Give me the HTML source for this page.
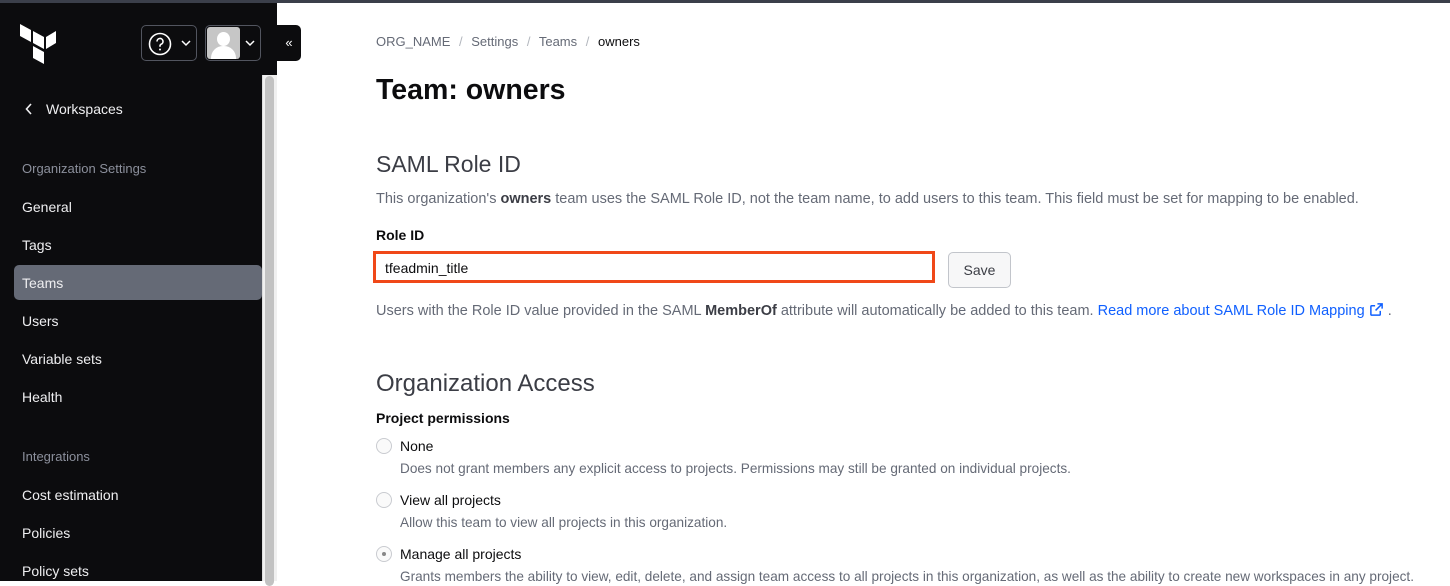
<!DOCTYPE html>
<html><head><style>
*{margin:0;padding:0;box-sizing:border-box}
body{width:1450px;height:581px;overflow:hidden;background:#fff;font-family:"Liberation Sans",sans-serif;position:relative;color:#3b3d45}
.top{position:absolute;left:0;top:0;width:1450px;height:3px;background:#3b3f4a}
.side{position:absolute;left:0;top:3px;width:262px;height:578px;background:#0c0c0e;color:#efeff1}
.track{position:absolute;left:262px;top:3px;width:15px;height:578px;background:#f0f0f0;border-left:1px solid #ddd}
.thumb{position:absolute;left:265px;top:76px;width:9px;height:510px;background:#c2c2c2;border-radius:5px}
.topside{position:absolute;left:262px;top:3px;width:15px;height:72px;background:#0c0c0e}
.tab{position:absolute;left:277px;top:25px;width:24px;height:36px;background:#0c0c0e;border-radius:0 5px 5px 0;color:#fff;font-size:13px;text-align:center;line-height:36px}
.nav{position:absolute;left:22px;font-size:14px;color:#efeff1}
.hdr{position:absolute;left:22px;font-size:13px;color:#8c909c}
.btn{position:absolute;top:25px;height:36px;border:1px solid #52555f;border-radius:5px}
.main{position:absolute;left:376px;color:#3b3d45}
.g{color:#656a76;font-size:14.5px}
.radio{position:absolute;left:376px;width:16px;height:16px;border:1px solid #c9cbd0;border-radius:50%;background:#fafafa}
.chev{position:absolute;left:39px;top:13px}
</style></head><body>
<div class="top"></div>
<div class="side">
<svg style="position:absolute;left:20px;top:21px" width="36" height="40" viewBox="0 0 36 40"><path d="M0 0l11 6v12L0 12z M13 7l11 6v12l-11-6z M26 13l10-6v12l-10 6z M13 22l11 6v12l-11-6z" fill="#fff"/></svg>
</div>
<div class="btn" style="left:141px;width:56px"><svg style="position:absolute;left:6px;top:6px" width="24" height="24" viewBox="0 0 24 24"><circle cx="12" cy="12" r="10.5" stroke="#fff" stroke-width="1.6" fill="none"/><path d="M9 9.5a3 3 0 1 1 4 2.8c-.8.4-1 1-1 1.8v.6" stroke="#fff" stroke-width="1.6" fill="none"/><circle cx="12" cy="17.5" r="1" fill="#fff"/></svg><svg class="chev" width="10" height="8" viewBox="0 0 10 8"><path d="M1 2l4 4 4-4" stroke="#fff" stroke-width="1.5" fill="none"/></svg></div>
<div class="btn" style="left:205px;width:56px"><div style="position:absolute;left:1px;top:1px;width:33px;height:32px;background:#c6c6c6;border-radius:3px;overflow:hidden"><div style="position:absolute;left:10px;top:5px;width:13px;height:14px;border-radius:50%;background:#fff"></div><div style="position:absolute;left:4px;top:19px;width:25px;height:20px;border-radius:12px 12px 0 0;background:#fff"></div></div><svg class="chev" width="10" height="8" viewBox="0 0 10 8"><path d="M1 2l4 4 4-4" stroke="#fff" stroke-width="1.5" fill="none"/></svg></div>
<div class="track"></div><div class="topside"></div><div class="thumb"></div>
<div class="tab">«</div>
<svg style="position:absolute;left:25px;top:103px" width="8" height="12" viewBox="0 0 8 12"><path d="M6 1L1.5 6 6 11" stroke="#efeff1" stroke-width="1.6" fill="none"/></svg>
<div class="nav" style="top:101px;left:46px">Workspaces</div>
<div class="hdr" style="top:161px">Organization Settings</div>
<div class="nav" style="top:199px">General</div>
<div class="nav" style="top:237px">Tags</div>
<div style="position:absolute;left:14px;top:265px;width:248px;height:35px;background:#656a76;border-radius:5px"></div>
<div class="nav" style="top:275px">Teams</div>
<div class="nav" style="top:313px">Users</div>
<div class="nav" style="top:351px">Variable sets</div>
<div class="nav" style="top:389px">Health</div>
<div class="hdr" style="top:449px">Integrations</div>
<div class="nav" style="top:487px">Cost estimation</div>
<div class="nav" style="top:525px">Policies</div>
<div class="nav" style="top:563px">Policy sets</div>

<div class="main g" style="top:34px;font-size:13px">ORG_NAME <span style="color:#b2b6bd;margin:0 5px">/</span> Settings <span style="color:#b2b6bd;margin:0 5px">/</span> Teams <span style="color:#b2b6bd;margin:0 5px">/</span> <span style="color:#0c0c0e">owners</span></div>
<div class="main" style="top:74px;font-size:28.5px;font-weight:bold;color:#0c0c0e">Team: owners</div>
<div class="main" style="top:151px;font-size:23px">SAML Role ID</div>
<div class="main g" style="top:191px">This organization's <b style="color:#3b3d45">owners</b> team uses the SAML Role ID, not the team name, to add users to this team. This field must be set for mapping to be enabled.</div>
<div class="main" style="top:227px;font-size:14px;font-weight:bold;color:#0c0c0e">Role ID</div>
<div style="position:absolute;left:373px;top:251px;width:562px;height:32px;border:3px solid #f04818;background:#fff"></div>
<div class="main" style="left:385px;top:260px;font-size:14px;color:#0c0c0e">tfeadmin_title</div>
<div style="position:absolute;left:948px;top:252px;width:63px;height:36px;border:1px solid #c2c5cb;border-radius:5px;background:#f7f7f8;font-size:14px;text-align:center;line-height:34px;color:#3b3d45">Save</div>
<div class="main g" style="top:302px">Users with the Role ID value provided in the SAML <b style="color:#3b3d45">MemberOf</b> attribute will automatically be added to this team. <span style="color:#1060ff">Read more about SAML Role ID Mapping <svg width="15" height="15" viewBox="0 0 16 16" style="vertical-align:-2px"><path d="M9 2h5v5M14 2L7 9M12 9.5V13a1 1 0 0 1-1 1H3a1 1 0 0 1-1-1V5a1 1 0 0 1 1-1h3.5" stroke="#1060ff" stroke-width="1.6" fill="none"/></svg></span> .</div>
<div class="main" style="top:370px;font-size:24px">Organization Access</div>
<div class="main" style="top:410px;font-size:14px;font-weight:bold;color:#0c0c0e">Project permissions</div>
<div class="radio" style="top:438px"></div>
<div class="main" style="left:400px;top:438px;font-size:14px;color:#0c0c0e">None</div>
<div class="main g" style="left:400px;top:461px;font-size:13.6px">Does not grant members any explicit access to projects. Permissions may still be granted on individual projects.</div>
<div class="radio" style="top:492px"></div>
<div class="main" style="left:400px;top:492px;font-size:14px;color:#0c0c0e">View all projects</div>
<div class="main g" style="left:400px;top:515px;font-size:13.6px">Allow this team to view all projects in this organization.</div>
<div class="radio" style="top:546px"><div style="position:absolute;left:5px;top:5px;width:4px;height:4px;border-radius:50%;background:#888"></div></div>
<div class="main" style="left:400px;top:546px;font-size:14px;color:#0c0c0e">Manage all projects</div>
<div class="main g" style="left:400px;top:569px;font-size:13.6px;white-space:nowrap">Grants members the ability to view, edit, delete, and assign team access to all projects in this organization, as well as the ability to create new workspaces in any project.</div>
</body></html>
